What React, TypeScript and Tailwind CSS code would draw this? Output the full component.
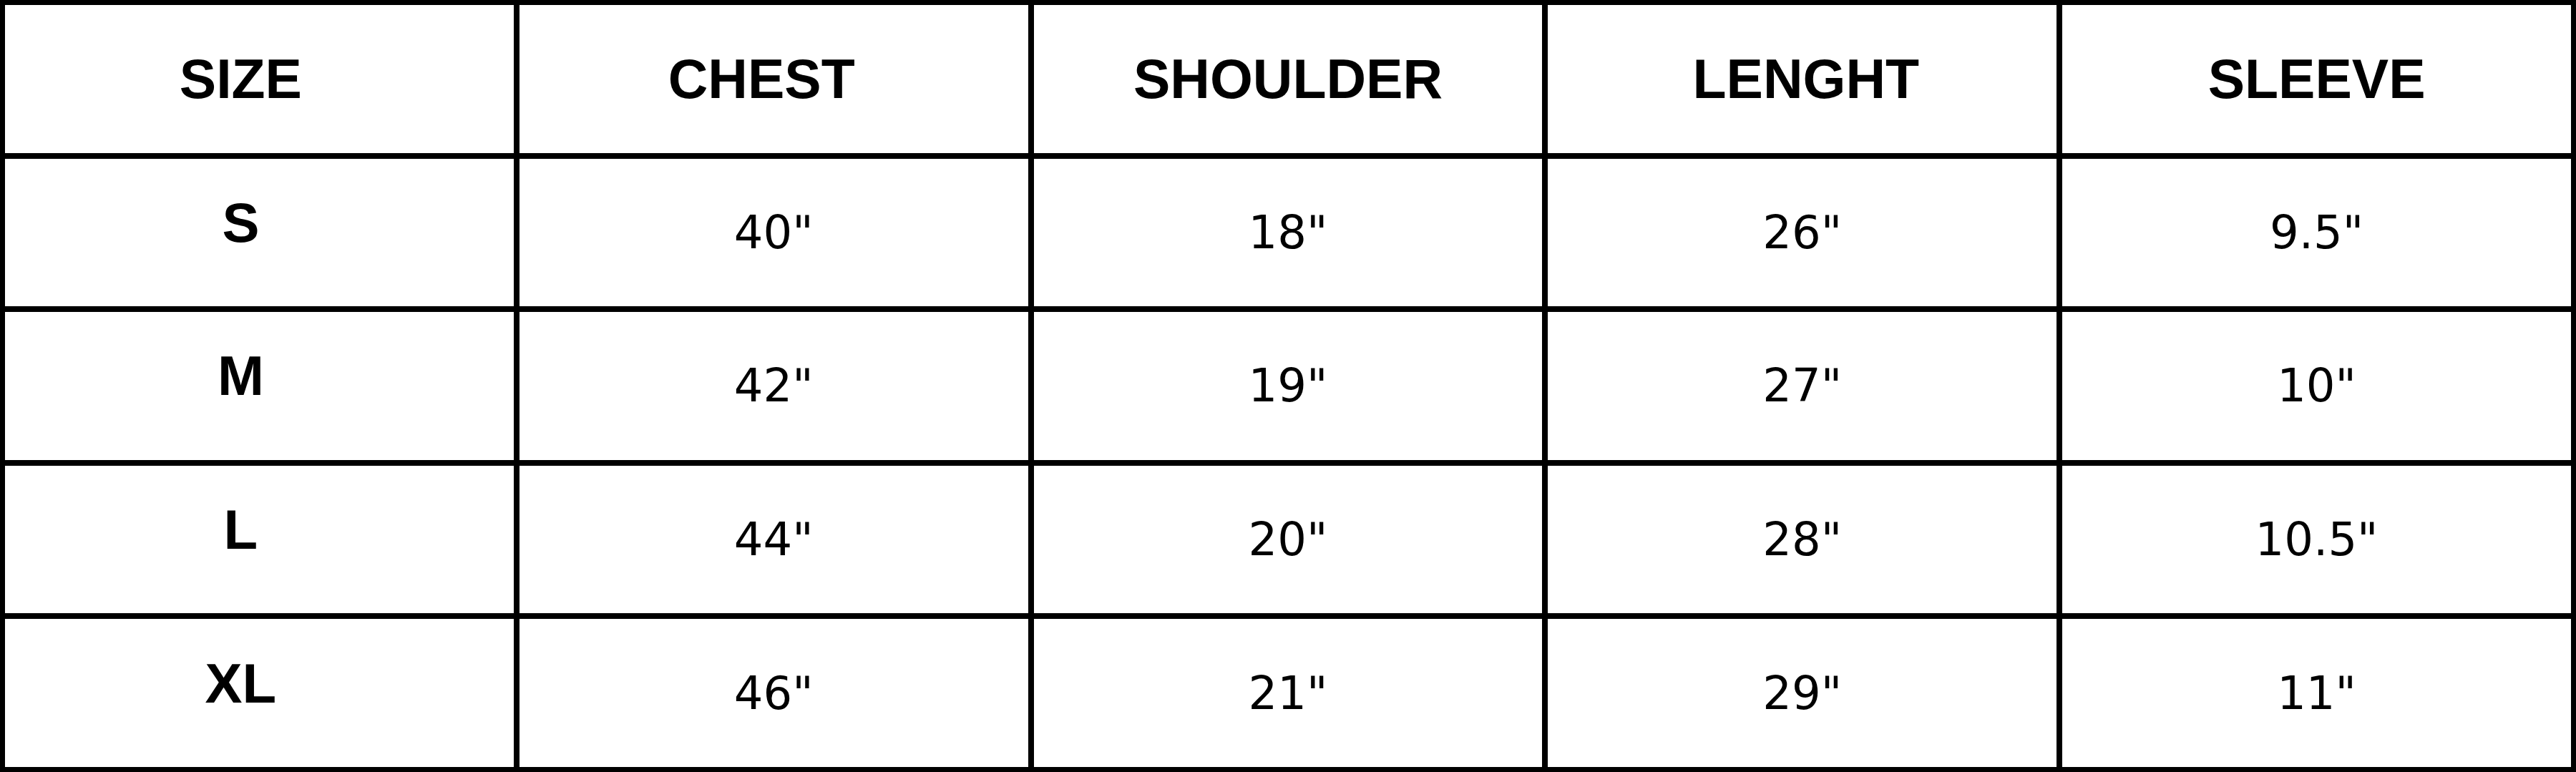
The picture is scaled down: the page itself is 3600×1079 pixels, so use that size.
import React from 'react';

const headers = ['SIZE', 'CHEST', 'SHOULDER', 'LENGHT', 'SLEEVE'];

const rows = [
  ['S', '40"', '18"', '26"', '9.5"'],
  ['M', '42"', '19"', '27"', '10"'],
  ['L', '44"', '20"', '28"', '10.5"'],
  ['XL', '46"', '21"', '29"', '11"'],
];

// small nudges so labels sit where the chart puts them
const headerPad = ['pr-[52px]', 'pr-[34px]', '', 'pl-[10px]', ''];

export default function App() {
  return (
    <div className="w-[3600px] h-[1079px] bg-white">
      <div className="grid grid-cols-5 grid-rows-5 gap-[8px] p-[7px] bg-black w-full h-full">
        {headers.map((h, i) => (
          <div
            key={h}
            className={`bg-white flex items-center justify-center text-black font-bold text-[77px] leading-none font-['Liberation_Sans',Arial,sans-serif] ${headerPad[i]}`}
          >
            {h}
          </div>
        ))}
        {rows.map((row) =>
          row.map((cell, i) =>
            i === 0 ? (
              <div
                key={row[0] + i}
                className="bg-white flex items-center justify-center text-black font-bold text-[78px] leading-none font-['Liberation_Sans',Arial,sans-serif] pr-[52px] pb-[28px]"
              >
                {cell}
              </div>
            ) : (
              <div
                key={row[0] + i}
                className="bg-white flex items-center justify-center text-black text-[64px] leading-none font-['DejaVu_Sans',sans-serif]"
              >
                {cell}
              </div>
            )
          )
        )}
      </div>
    </div>
  );
}
